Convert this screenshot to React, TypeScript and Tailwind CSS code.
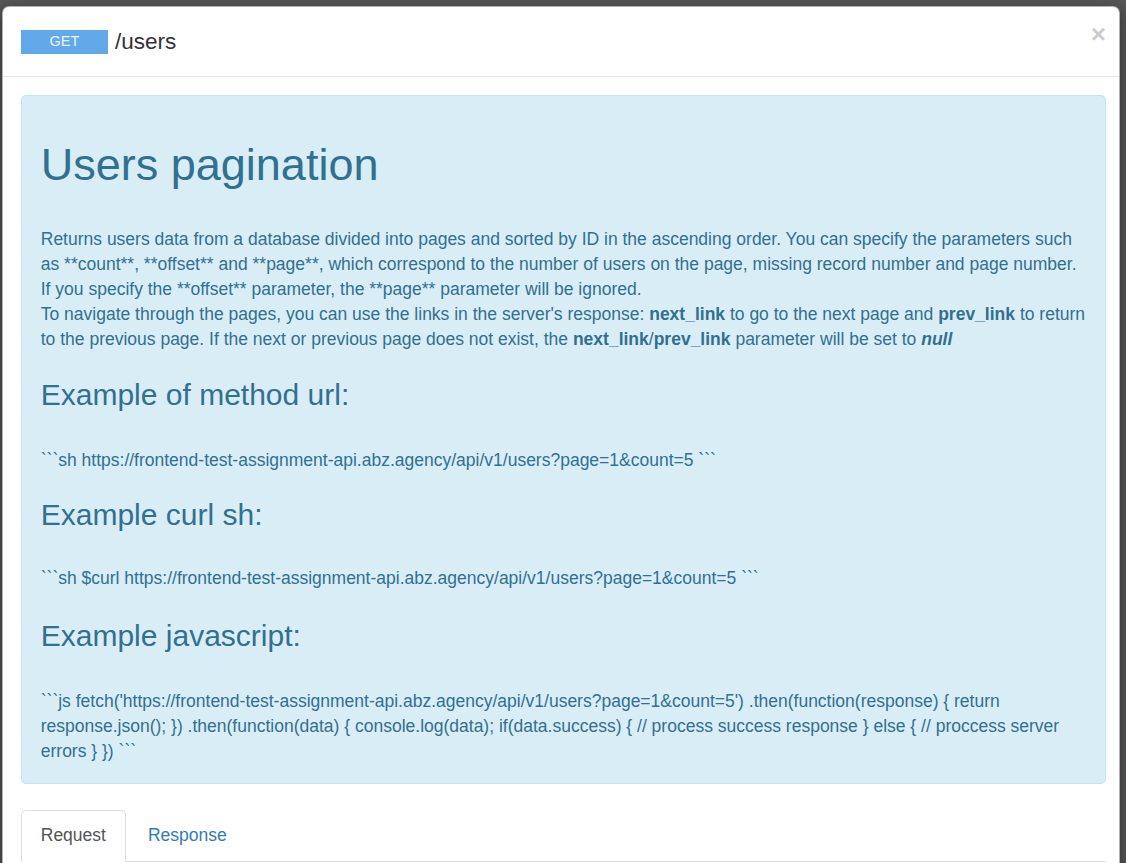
export default function App() {
  return (
    <div className="min-h-screen bg-[#575757] pl-[2px] pr-[6px] pt-[6px] font-['Liberation_Sans',Arial,sans-serif]">
      <div className="rounded-[7px] border border-black/30 bg-white shadow-[0_5px_15px_rgba(0,0,0,0.5)]">
        {/* header */}
        <div className="flex h-[70px] items-center border-b border-[#e5e5e5] pl-[18px] pr-[13px]">
          <span className="flex h-[24px] w-[87px] items-center justify-center bg-[#61a9e9] text-[14.5px] text-[#eaf3fc]">
            GET
          </span>
          <span className="ml-[7px] text-[22.5px] leading-[32px] text-[#333]">/users</span>
          <button className="ml-auto -mt-[15px] text-[26px] font-bold leading-none text-black opacity-20">×</button>
        </div>

        {/* body */}
        <div className="pl-[18px] pr-[13px] pt-[18px]">
          <div className="rounded-[5px] border border-[#bce8f1] bg-[#d9edf7] px-[18.75px] pt-[18.75px] pb-[18.5px] text-[17.5px] leading-[25px] text-[#31708f]">
            <h1 className="mt-[25px] text-[45px] leading-[49.5px]">Users pagination</h1>
            <p className="mt-[38px]">
              Returns users data from a database divided into pages and sorted by ID in the ascending order. You can specify
              the parameters such as **count**, **offset** and **page**, which correspond to the number of users on the page,
              missing record number and page number. If you specify the **offset** parameter, the **page** parameter will be
              ignored.
              <br />
              To navigate through the pages, you can use the links in the server's response: <b>next_link</b> to go to the next
              page and <b>prev_link</b> to return to the previous page. If the next or previous page does not exist, the{" "}
              <b>next_link</b>/<b>prev_link</b> parameter will be set to{" "}
              <b>
                <i>null</i>
              </b>
            </p>

            <h3 className="mt-[26px] text-[30px] leading-[33px]">Example of method url:</h3>
            <p className="mt-[37px]">```sh https://frontend-test-assignment-api.abz.agency/api/v1/users?page=1&amp;count=5 ```</p>

            <h3 className="mt-[24.5px] text-[30px] leading-[33px]">Example curl sh:</h3>
            <p className="mt-[35.5px]">```sh $curl https://frontend-test-assignment-api.abz.agency/api/v1/users?page=1&amp;count=5 ```</p>

            <h3 className="mt-[27.5px] text-[30px] leading-[33px]">Example javascript:</h3>
            <p className="mt-[37.5px]">
              {"```js fetch('https://frontend-test-assignment-api.abz.agency/api/v1/users?page=1&count=5') .then(function(response) { return response.json(); }) .then(function(data) { console.log(data); if(data.success) { // process success response } else { // proccess server errors } }) ```"}
            </p>
          </div>

          {/* tabs */}
          <div className="mt-[26px] flex border-b border-[#ddd] text-[17.5px] leading-[25px]">
            <div className="-mb-px mr-[2.5px] rounded-t-[5px] border border-[#ddd] border-b-transparent bg-white px-[18.75px] py-[12.5px] text-[#555]">
              Request
            </div>
            <div className="-mb-px mr-[2.5px] border border-transparent px-[18.75px] py-[12.5px] text-[#337ab7]">Response</div>
          </div>
          <div className="h-[200px]" />
        </div>
      </div>
    </div>
  );
}
